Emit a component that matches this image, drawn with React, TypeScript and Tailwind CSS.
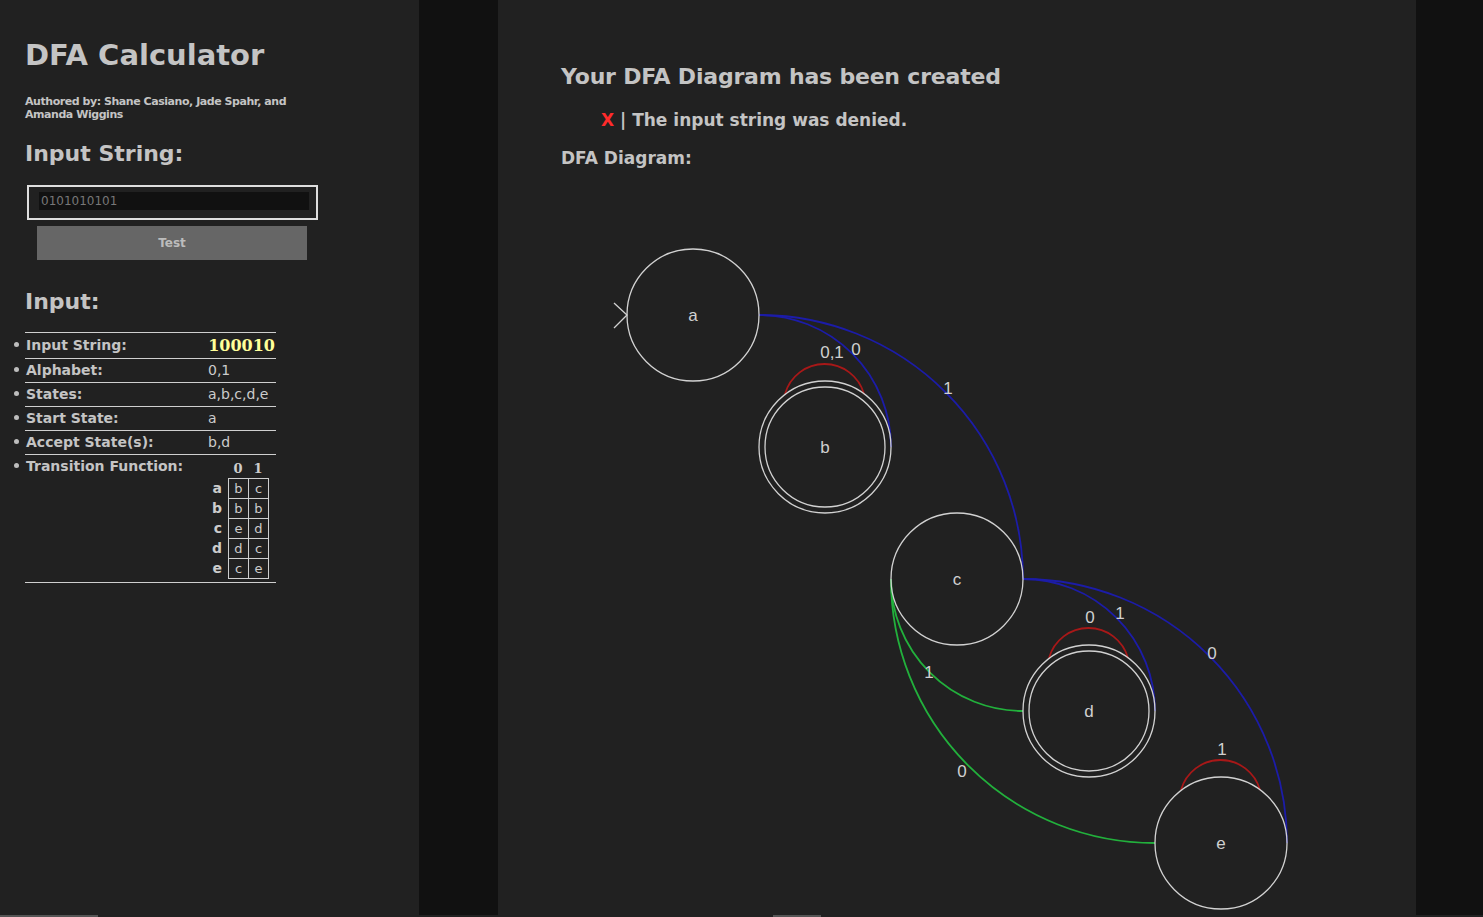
import React from "react";

const sans = "font-['DejaVu_Sans',Verdana,sans-serif]";
const serif = "font-['DejaVu_Serif',Georgia,serif]";

const transitions: [string, string, string][] = [
  ["a", "b", "c"],
  ["b", "b", "b"],
  ["c", "e", "d"],
  ["d", "d", "c"],
  ["e", "c", "e"],
];

// one bullet row of the input summary
const InfoRow = ({ label, h, children }: { label: string; h: string; children: React.ReactNode }) => (
  <div className="flex">
    <div className={`w-[13px] ${h} flex items-center pl-[2px]`}>
      <div className="w-[5px] h-[5px] rounded-full bg-[#bdbdbd]" />
    </div>
    <div className="w-[251px] border-t border-[#cfcfcf] flex">
      <div className={`w-[183px] ${h} pl-[1px] flex items-center text-[14px] font-bold text-[#c4c4c4]`}>{label}</div>
      <div className="flex-1">{children}</div>
    </div>
  </div>
);

const StateCircle = ({ x, y, label, accept }: { x: number; y: number; label: string; accept?: boolean }) => (
  <g>
    <circle cx={x} cy={y} r={66} fill="none" stroke="#d2d2d2" strokeWidth={1.3} />
    {accept && <circle cx={x} cy={y} r={60} fill="none" stroke="#d2d2d2" strokeWidth={1.3} />}
    <text x={x} y={y} textAnchor="middle" dominantBaseline="central" fill="#d0d0d0" fontSize={17}>
      {label}
    </text>
  </g>
);

const EdgeLabel = ({ x, y, t }: { x: number; y: number; t: string }) => (
  <text x={x} y={y} textAnchor="middle" dominantBaseline="central" fill="#d0d0d0" fontSize={17}>
    {t}
  </text>
);

function Diagram() {
  const blue = "#1c1ca8";
  const red = "#a81818";
  const green = "#22b03c";
  return (
    <svg
      width={918}
      height={735}
      viewBox="498 180 918 735"
      className="block mt-[12px] -ml-[63px]"
      fontFamily="'Liberation Sans', Arial, sans-serif"
    >
      {/* transitions */}
      <path d="M759 315 A132 132 0 0 1 891 447" fill="none" stroke={blue} strokeWidth={1.8} />
      <path d="M759 315 A264 264 0 0 1 1023 579" fill="none" stroke={blue} strokeWidth={1.8} />
      <path d="M1023 579 A132 132 0 0 1 1155 711" fill="none" stroke={blue} strokeWidth={1.8} />
      <path d="M1023 579 A264 264 0 0 1 1287 843" fill="none" stroke={blue} strokeWidth={1.8} />
      <path d="M891 579 A132 132 0 0 0 1023 711" fill="none" stroke={green} strokeWidth={1.8} />
      <path d="M891 579 A264 264 0 0 0 1155 843" fill="none" stroke={green} strokeWidth={1.8} />
      {/* self loops */}
      <path d="M785 394 A41 41 0 0 1 864 394" fill="none" stroke={red} strokeWidth={1.8} />
      <path d="M1049 658 A41 41 0 0 1 1128 658" fill="none" stroke={red} strokeWidth={1.8} />
      <path d="M1181 790 A41 41 0 0 1 1260 790" fill="none" stroke={red} strokeWidth={1.8} />
      {/* start arrow */}
      <path d="M614 303 L627 315 L614 328" fill="none" stroke="#d2d2d2" strokeWidth={1.3} />

      <StateCircle x={693} y={315} label="a" />
      <StateCircle x={825} y={447} label="b" accept />
      <StateCircle x={957} y={579} label="c" />
      <StateCircle x={1089} y={711} label="d" accept />
      <StateCircle x={1221} y={843} label="e" />

      <EdgeLabel x={832} y={352} t="0,1" />
      <EdgeLabel x={856} y={349} t="0" />
      <EdgeLabel x={948} y={388} t="1" />
      <EdgeLabel x={1090} y={617} t="0" />
      <EdgeLabel x={1120} y={613} t="1" />
      <EdgeLabel x={1212} y={653} t="0" />
      <EdgeLabel x={929} y={672} t="1" />
      <EdgeLabel x={962} y={771} t="0" />
      <EdgeLabel x={1222} y={749} t="1" />
    </svg>
  );
}

export default function App() {
  return (
    <div className={`w-[1483px] h-[917px] overflow-hidden bg-[#212121] flex flex-col ${sans}`}>
      <div className="flex h-[915px]">
        {/* sidebar */}
        <div className="w-[419px] shrink-0 bg-[#212121] pl-[25px] flex flex-col">
          <h1 className="mt-[37px] text-[29px] leading-[36px] font-bold text-[#c4c4c4]">DFA Calculator</h1>
          <p className="mt-[22px] w-[270px] text-[11px] leading-[13px] tracking-[-0.45px] font-bold text-[#c4c4c4]">
            Authored by: Shane Casiano, Jade Spahr, and Amanda Wiggins
          </p>
          <h2 className="mt-[20px] text-[22px] leading-[26px] font-bold text-[#c4c4c4]">Input String:</h2>
          <div className="mt-[18px] ml-[2px] w-[291px] h-[35px] border-2 border-[#dedede] pl-[10px] pt-[5px]">
            <input
              defaultValue="0101010101"
              className="block w-[270px] h-[18px] bg-[#111111] pl-[2px] text-[12px] text-[#777777] outline-none"
            />
          </div>
          <button className="mt-[6px] ml-[12px] w-[270px] h-[34px] bg-[#666666] text-[12px] font-bold text-[#bcbcbc]">
            Test
          </button>
          <h2 className="mt-[29px] text-[22px] leading-[26px] font-bold text-[#c4c4c4]">Input:</h2>

          <div className="mt-[17px] -ml-[13px] flex flex-col">
            <InfoRow label="Input String:" h="h-[25px]">
              <div className={`h-[25px] flex items-center justify-end pr-[1px] text-[16px] font-bold text-[#ffff99] ${serif}`}>
                100010
              </div>
            </InfoRow>
            <InfoRow label="Alphabet:" h="h-[23px]">
              <div className="h-[23px] flex items-center text-[14px] text-[#cccccc]">0,1</div>
            </InfoRow>
            <InfoRow label="States:" h="h-[23px]">
              <div className="h-[23px] flex items-center text-[14px] text-[#cccccc]">a,b,c,d,e</div>
            </InfoRow>
            <InfoRow label="Start State:" h="h-[23px]">
              <div className="h-[23px] flex items-center text-[14px] text-[#cccccc]">a</div>
            </InfoRow>
            <InfoRow label="Accept State(s):" h="h-[23px]">
              <div className="h-[23px] flex items-center text-[14px] text-[#cccccc]">b,d</div>
            </InfoRow>
            <InfoRow label="Transition Function:" h="h-[23px]">
              <div className="h-[127px]">
                <div className={`h-[23px] pt-[4px] leading-[19px] flex text-[13px] font-bold text-[#cccccc] ${serif}`}>
                  <div className="w-[20px]" />
                  <div className="w-[20px] text-center">0</div>
                  <div className="w-[20px] text-center">1</div>
                </div>
                {transitions.map(([s, z, o]) => (
                  <div key={s} className="flex h-[20px]">
                    <div className="w-[20px] pr-[6px] text-right text-[14px] leading-[20px] font-bold text-[#cccccc]">{s}</div>
                    <div className="w-[21px] h-[21px] border border-[#cfcfcf] text-center text-[13px] leading-[19px] text-[#cccccc]">
                      {z}
                    </div>
                    <div className="-ml-[1px] w-[21px] h-[21px] border border-[#cfcfcf] text-center text-[13px] leading-[19px] text-[#cccccc]">
                      {o}
                    </div>
                  </div>
                ))}
              </div>
            </InfoRow>
            <div className="ml-[13px] w-[251px] border-t border-[#cfcfcf]" />
          </div>
        </div>

        {/* left gutter */}
        <div className="w-[79px] shrink-0 bg-[#111111]" />

        {/* main */}
        <div className="w-[918px] shrink-0 bg-[#212121] pl-[63px] flex flex-col overflow-hidden">
          <h1 className="mt-[64px] text-[22px] leading-[26px] tracking-[-0.2px] font-bold text-[#c4c4c4]">
            Your DFA Diagram has been created
          </h1>
          <p className="mt-[20px] ml-[40px] text-[17px] leading-[20px] font-bold text-[#c4c4c4]">
            <span className="text-[#ff2b2b]">X</span> | The input string was denied.
          </p>
          <h3 className="mt-[18px] text-[17px] leading-[20px] font-bold text-[#c4c4c4]">DFA Diagram:</h3>
          <Diagram />
        </div>

        {/* right gutter */}
        <div className="flex-1 bg-[#111111]" />
      </div>

      {/* scrollbar strip */}
      <div className="h-[2px] flex">
        <div className="w-[98px] bg-[#555555]" />
        <div className="w-[675px]" />
        <div className="w-[48px] bg-[#555555]" />
      </div>
    </div>
  );
}
